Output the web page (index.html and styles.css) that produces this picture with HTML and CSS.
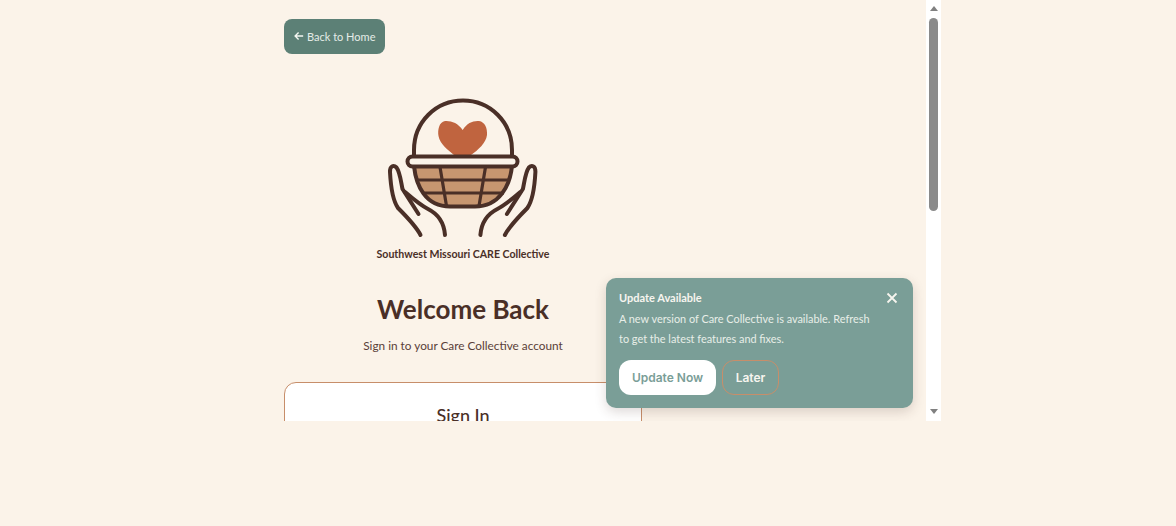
FILE: index.html
```html
<!DOCTYPE html>
<html lang="en">
<head>
<meta charset="utf-8">
<title>Welcome Back</title>
<link rel="stylesheet" href="styles.css">
</head>
<body>
<div class="frame">
  <main class="page">
    <div class="container">
      <a class="back" href="#">
        <svg class="back-icon" viewBox="0 0 12 12"><path d="M11 6H1.500M5.500 1.800 1.300 6l4.200 4.200"/></svg>
        Back to Home
      </a>
      <svg class="logo" viewBox="0 0 226 190" role="img" aria-label="Southwest Missouri CARE Collective">
        <path class="heart" d="M112.7 50C108 43 101 40.500 95 41C89 42 87.500 50 88.500 56C90 64 98 70 104 75H121C128 70 136 63 137 55C137.500 48 135 42 129 41C123 40.500 117 43 112.700 50Z"/>
        <path class="line" d="M64 75V70C64 42 86 20.500 113 20.500C140 20.500 162 42 162 70V75"/>
        <path class="bowl" d="M64 86C66 105 75 126.500 100 126.500H125C150 126.500 160 105 162 86Z"/>
        <path class="line thin" d="M66 100H160M72 113H154M90 87 96.500 126M135.500 87 129 126"/>
        <rect class="rim" x="57.500" y="76.500" width="110" height="10" rx="5"/>
        <g>
          <path class="line" d="M70.500 155C66 146 57 137 48 128C42.500 120 40.500 102 40 92C39.800 86 43.500 84.500 46.500 87.500C50 92 51 102 52.500 109L68.500 134"/>
          <path class="line" d="M55 112C62 118 70 125 78 129C88 134 94 142 95 155"/>
        </g>
        <g transform="matrix(-1 0 0 1 225.400 0)">
          <path class="line" d="M70.500 155C66 146 57 137 48 128C42.500 120 40.500 102 40 92C39.800 86 43.500 84.500 46.500 87.500C50 92 51 102 52.500 109L68.500 134"/>
          <path class="line" d="M55 112C62 118 70 125 78 129C88 134 94 142 95 155"/>
        </g>
        <text class="logo-text" x="113" y="177.500" text-anchor="middle">Southwest Missouri CARE Collective</text>
      </svg>
      <h1 class="title">Welcome Back</h1>
      <p class="subtitle">Sign in to your Care Collective account</p>
      <section class="card">
        <h2 class="card-title">Sign In</h2>
      </section>
    </div>
    <aside class="toast">
      <div class="toast-head">
        <h3 class="toast-title">Update Available</h3>
        <svg class="close" viewBox="0 0 12 12"><path d="M1.500 1.500 10.500 10.500M10.500 1.500 1.500 10.500"/></svg>
      </div>
      <p class="toast-text">A new version of Care Collective is available. Refresh to get the latest features and fixes.</p>
      <div class="toast-actions">
        <button class="btn btn-primary">Update Now</button>
        <button class="btn btn-ghost">Later</button>
      </div>
    </aside>
  </main>
  <div class="scrollbar">
    <span class="arrow arrow-up"></span>
    <div class="track"><div class="thumb"></div></div>
    <span class="arrow arrow-down"></span>
  </div>
</div>
</body>
</html>
```
FILE: styles.css
```css
* { box-sizing: border-box; }
html, body { margin: 0; height: 100%; }
body {
  background: #fbf3e9;
  font-family: Lato, "Open Sans", sans-serif;
  color: #4a2f27;
  overflow: hidden;
}
.frame { display: flex; width: 941px; height: 421px; }
.page { position: relative; flex: 1; overflow: hidden; }
.container {
  display: flex;
  flex-direction: column;
  width: 358px;
  margin: 0 auto;
  padding-top: 19px;
}
.back {
  display: inline-flex;
  align-items: center;
  gap: 3px;
  align-self: flex-start;
  width: 101px;
  height: 35px;
  padding: 0 0 1px 10px;
  background: #5c8076;
  border-radius: 8px;
  color: #e4ece7;
  font-size: 11px;
  text-decoration: none;
}
.back-icon { width: 10px; height: 10px; fill: none; stroke: #f4f6f2; stroke-width: 1.600; }
.logo { display: block; width: 226px; height: 190px; margin: 26px auto 0; }
.line { fill: none; stroke: #4a2f27; stroke-width: 4; stroke-linecap: round; stroke-linejoin: round; }
.thin { stroke-width: 3.200; stroke-linecap: butt; }
.heart { fill: #c0643f; }
.bowl { fill: #c79670; stroke: #4a2f27; stroke-width: 4; stroke-linejoin: round; }
.rim { fill: #fbf3e9; stroke: #4a2f27; stroke-width: 4; }
.logo-text { font-family: Lato, sans-serif; font-size: 10.600px; font-weight: 700; fill: #4a2f27; }
.title { margin: 22px 0 0; font-size: 26px; line-height: 34px; font-weight: 700; text-align: center; }
.subtitle { margin: 10px 0 0; font-size: 11.800px; line-height: 20px; text-align: center; color: #5a4038; }
.card {
  margin-top: 26px;
  height: 120px;
  padding-top: 20px;
  background: #fff;
  border: 1px solid #c78e6a;
  border-radius: 12px;
}
.card-title { margin: 0; font-size: 18px; line-height: 24px; font-weight: 500; text-align: center; }
.toast {
  position: absolute;
  right: 13px;
  bottom: 13px;
  width: 307px;
  height: 130px;
  padding: 12px 13px;
  background: #7a9e97;
  border-radius: 10px;
  box-shadow: 0 4px 12px rgba(74, 47, 39, 0.18);
  color: #fff;
}
.toast-head { display: flex; justify-content: space-between; align-items: center; height: 16px; }
.toast-title { margin: 0; font-size: 11px; line-height: 16px; font-weight: 700; color: #f7f5ef; }
.close { width: 12px; height: 12px; margin-right: 2px; fill: none; stroke: #f7f5ef; stroke-width: 1.800; }
.toast-text { margin: 3px 0 0; width: 256px; font-size: 10.900px; line-height: 20px; color: #e8eee8; }
.toast-actions { display: flex; gap: 6px; margin-top: 11px; }
.btn {
  height: 35px;
  padding: 0;
  border-radius: 12px;
  font-family: Inter, sans-serif;
  font-size: 12px;
  font-weight: 600;
}
.btn-primary { width: 97px; background: #fff; border: 0; color: #7a9e97; }
.btn-ghost { width: 57px; background: transparent; border: 1px solid #c78e6a; color: #f7f5ef; }
.scrollbar { display: flex; flex-direction: column; align-items: center; width: 15px; background: #fff; }
.arrow { flex: none; width: 0; height: 0; border-left: 4.500px solid transparent; border-right: 4.500px solid transparent; }
.arrow-up { margin-top: 6px; border-bottom: 5px solid #808080; }
.arrow-down { margin-bottom: 7px; border-top: 5px solid #808080; }
.track { flex: 1; width: 100%; padding: 7px 3px 0; }
.thumb { height: 193px; background: #8a8a8a; border-radius: 5px; }
```
